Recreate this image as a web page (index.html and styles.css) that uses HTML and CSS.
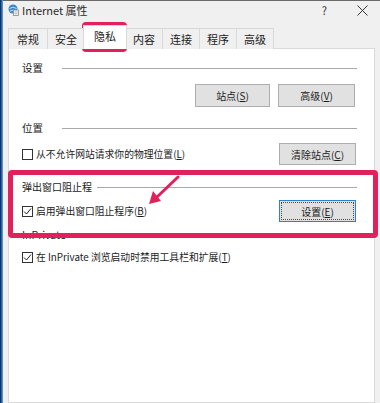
FILE: index.html
```html
<!DOCTYPE html>
<html lang="zh-CN">
<head>
<meta charset="utf-8">
<title>Internet 属性</title>
<link rel="stylesheet" href="styles.css">
</head>
<body>
<div class="window">
  <div class="edge"></div>
  <div class="main">
    <div class="titlebar">
      <svg class="app-icon" width="11" height="12" viewBox="0 0 11 12">
        <circle cx="5" cy="5" r="4.5" fill="#3a87c9"/>
        <path d="M1.5 4.5 Q5 2 8.5 4.5 M2 7 Q5 5.5 8 7" stroke="#bfe0f5" stroke-width="1" fill="none"/>
        <rect x="5.5" y="6" width="5" height="5.5" fill="#f4f4f4" stroke="#8a8a8a" stroke-width="0.8"/>
        <path d="M6.7 8 H9.3 M6.7 9.7 H9.3" stroke="#9a9a9a" stroke-width="0.7"/>
      </svg>
      <span class="title">Internet 属性</span>
      <span class="help">?</span>
      <svg class="close" width="11" height="11" viewBox="0 0 11 11">
        <path d="M0.5 0.5 L10.5 10.5 M10.5 0.5 L0.5 10.5" stroke="#333" stroke-width="1"/>
      </svg>
    </div>
    <div class="tabs">
      <div class="tab">常规</div>
      <div class="tab">安全</div>
      <div class="tab active">隐私</div>
      <div class="tab">内容</div>
      <div class="tab">连接</div>
      <div class="tab">程序</div>
      <div class="tab">高级</div>
    </div>
    <div class="panel">
      <div class="group-head"><span class="label">设置</span><span class="rule rule-wide"></span></div>
      <div class="btn-row">
        <button class="btn btn-site">站点(<u>S</u>)</button>
        <button class="btn">高级(<u>V</u>)</button>
      </div>

      <div class="group-head gh-loc"><span class="label">位置</span><span class="rule rule-wide"></span></div>
      <div class="opt-row row-loc">
        <span class="check"></span>
        <span class="opt-text">从不允许网站请求你的物理位置(<u>L</u>)</span>
        <button class="btn btn-push">清除站点(<u>C</u>)</button>
      </div>

      <div class="group-head gh-pop"><span class="label">弹出窗口阻止程</span><span class="rule rule-tight"></span></div>
      <div class="opt-row row-pop">
        <span class="check checked"><svg width="9" height="9" viewBox="0 0 9 9"><path d="M1 4.5 L3.5 7 L8 1.5" stroke="#222" stroke-width="1" fill="none"/></svg></span>
        <span class="opt-text">启用弹出窗口阻止程序(<u>B</u>)</span>
        <button class="btn btn-push btn-focus"><span class="focus-ring">设置(<u>E</u>)</span></button>
      </div>

      <div class="group-head gh-priv"><span class="label">InPrivate</span><span class="rule rule-wide"></span></div>
      <div class="opt-row row-priv">
        <span class="check checked"><svg width="9" height="9" viewBox="0 0 9 9"><path d="M1 4.5 L3.5 7 L8 1.5" stroke="#222" stroke-width="1" fill="none"/></svg></span>
        <span class="opt-text">在 InPrivate 浏览启动时禁用工具栏和扩展(<u>T</u>)</span>
      </div>
    </div>
  </div>
</div>

<div class="mark mark-tab"></div>
<div class="mark mark-box"></div>
<svg class="arrow" width="380" height="403" viewBox="0 0 380 403">
  <path d="M178 177 L157 197" stroke="#e0215c" stroke-width="3" stroke-linecap="round"/>
  <polygon points="149,204 161,201 153,191" fill="#e0215c"/>
</svg>
</body>
</html>
```

FILE: styles.css
```css
* { box-sizing: border-box; }

body {
  margin: 0;
  width: 380px;
  height: 403px;
  overflow: hidden;
  position: relative;
  background: #f0f0f0;
  font-family: "Noto Sans CJK SC", "Microsoft YaHei", sans-serif;
  font-size: 9.8px;
  color: #1c1c1c;
}

.window {
  display: flex;
  height: 403px;
}

.edge {
  width: 3px;
  background: linear-gradient(to right, #0f3566 0 1px, #2767a8 1px 2px, #5590cc 2px 3px);
}

.main {
  flex: 1;
  display: flex;
  flex-direction: column;
  padding: 0 5px;
  border-top: 1px solid #6a6a6a;
}

.titlebar {
  height: 24px;
  display: flex;
  align-items: center;
  padding-bottom: 6px;
}

.app-icon { margin-right: 3px; }

.title {
  font-size: 11px;
  color: #2a2a2a;
}

.help {
  margin-left: auto;
  margin-right: 30px;
  font-size: 11px;
  color: #333;
}

.close { margin-right: 7px; }

.tabs {
  display: flex;
  align-items: flex-end;
  height: 24px;
  margin-bottom: -1px;
  position: relative;
  z-index: 1;
  font-size: 11px;
}

.tab {
  width: 38px;
  height: 21px;
  text-align: center;
  line-height: 20px;
  border: 1px solid #d9d9d9;
  border-bottom: none;
  background: #f0f0f0;
  margin-right: -1px;
  color: #1c1c1c;
}

.tab:first-child { width: 40px; }

.tab.active {
  width: 44px;
  height: 24px;
  line-height: 20px;
  background: #fff;
  margin-left: -1px;
  margin-right: -2px;
  position: relative;
  z-index: 2;
}

.panel {
  flex: 1;
  background: #fff;
  border: 1px solid #d9d9d9;
  padding: 11px 17px 0 13px;
  display: flex;
  flex-direction: column;
}

.group-head {
  display: flex;
  align-items: center;
  line-height: 16px;
  height: 16px;
}

.label { font-size: 10.5px; }

.rule {
  flex: 1;
  height: 1px;
  background: #a8a8a8;
}

.rule-wide { margin-left: 19px; }
.rule-tight { margin-left: 5px; }

.btn-row {
  display: flex;
  justify-content: flex-end;
  gap: 8px;
  margin-top: 8px;
  padding-right: 2px;
}

.btn {
  height: 23px;
  width: 77px;
  padding: 0;
  font: inherit;
  font-size: 10px;
  color: #1c1c1c;
  background: #e1e1e1;
  border: 1px solid #adadad;
}

.btn-site { width: 75px; }

.gh-loc { margin-top: 13px; }
.gh-pop { margin-top: 14px; }
.gh-pop .label { font-size: 10px; }
.gh-priv { margin-top: 5px; }

.opt-row {
  display: flex;
  align-items: center;
}

.row-loc { margin-top: 7px; }
.row-pop { margin-top: 5px; }
.row-priv { margin-top: 6px; }

.check {
  width: 11px;
  height: 11px;
  border: 1px solid #333;
  background: #fff;
  margin-right: 3px;
  display: flex;
  align-items: center;
  justify-content: center;
}

.opt-text { line-height: 16px; }

.btn-push {
  margin-left: auto;
  margin-right: 1px;
  height: 22px;
}

.btn-focus {
  border: 1px solid #2f7fd0;
  padding: 1px;
}

.focus-ring {
  display: flex;
  align-items: center;
  justify-content: center;
  width: 100%;
  height: 100%;
  border: 1px dotted #4a4a4a;
}

.mark {
  position: absolute;
  border: 4px solid #e0215c;
  border-radius: 4px;
  pointer-events: none;
}

.mark-tab {
  left: 82px;
  top: 22px;
  width: 45px;
  height: 30px;
}

.mark-box {
  left: 8px;
  top: 170px;
  width: 370px;
  height: 68px;
  border-width: 5px;
}

.arrow {
  position: absolute;
  left: 0;
  top: 0;
  pointer-events: none;
}
```
